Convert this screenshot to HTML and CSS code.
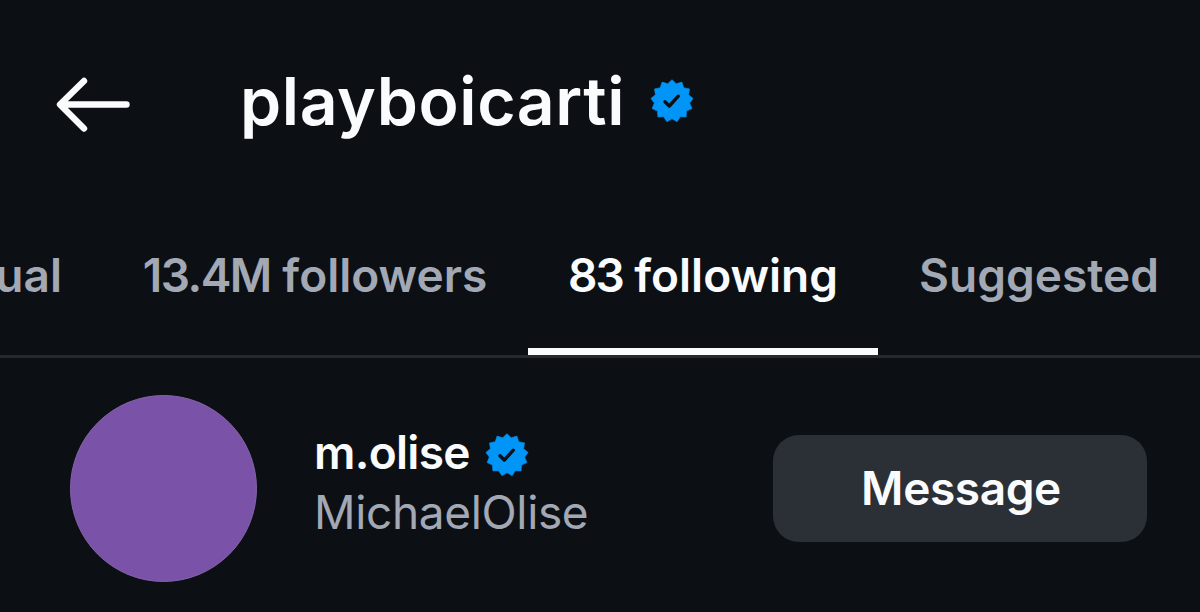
FILE: index.html
```html
<!DOCTYPE html>
<html lang="en">
<head>
    <meta charset="utf-8">
    <meta name="viewport" content="width=device-width, initial-scale=1">
    <title>playboicarti</title>
    <link rel="stylesheet" href="styles.css">
</head>
<body>
    <svg width="0" height="0" class="defs">
        <symbol id="verified" viewBox="-22 -22 44 44">
            <polygon fill="#0095f6" stroke="#0095f6" stroke-width=".6" stroke-linejoin="round" points="0,-21.3 4.3,-17.3 9.9,-18.9 11.8,-13.3 17.5,-12.1 16.6,-6.3 21.1,-2.6 17.7,2.1 19.9,7.6 14.6,10.1 14.1,15.9 8.3,15.8 5.1,20.7 0,17.8 -5.1,20.7 -8.3,15.8 -14.1,15.9 -14.6,10.1 -19.9,7.6 -17.7,2.1 -21.1,-2.6 -16.6,-6.3 -17.5,-12.1 -11.8,-13.3 -9.9,-18.9 -4.3,-17.3"/>
            <path d="M-7 .8 L-2.7 5 L6.3 -4.8" fill="none" stroke="#0c1014" stroke-width="3.4" stroke-linecap="round" stroke-linejoin="round"/>
        </symbol>
    </svg>

    <div class="header">
        <svg class="back" width="76" height="56" viewBox="0 0 76 56">
            <path d="M71.5 28.5H5.5M29 5L5 28.5L29 52.5" fill="none" stroke="#f9fbfd" stroke-width="6.4" stroke-linecap="round" stroke-linejoin="round"/>
        </svg>
        <h1>playboicarti</h1>
        <svg class="badge"><use href="#verified"/></svg>
    </div>

    <div class="tabs">
        <div class="tab mutual"><span>mutual</span></div>
        <div class="tab followers"><span><span class="count">13.4M</span> followers</span></div>
        <div class="tab following active"><span><span class="count">83</span> following</span></div>
        <div class="tab suggested"><span>Suggested</span></div>
    </div>

    <div class="user">
        <div class="avatar"></div>
        <div class="info">
            <div class="name"><span>m.olise</span><svg class="badge"><use href="#verified"/></svg></div>
            <div class="fullname"><span>MichaelOlise</span></div>
        </div>
        <button class="message"><span>Message</span></button>
    </div>
</body>
</html>
```

FILE: styles.css
```css
* {
    box-sizing: border-box;
}
body {
    margin: 0;
    width: 1200px;
    height: 612px;
    overflow: hidden;
    background: #0c1014;
    color: #f9fbfd;
    font-family: Inter, sans-serif;
    font-size: 46px;
    font-weight: 600;
}
.defs {
    display: block;
}
.badge {
    width: 44px;
    height: 44px;
    flex: none;
}

/* header */
.header {
    display: flex;
    align-items: center;
    height: 206px;
    padding-left: 55px;
}
.back {
    margin-top: 2px;
}
h1 {
    margin: -5px 0 0 109px;
    width: 387px;
    font-size: 66px;
    line-height: 80px;
    font-weight: 600;
    letter-spacing: .6px;
    white-space: nowrap;
}
.header .badge {
    margin: -5px 0 0 23px;
}

/* tabs */
.tabs {
    display: flex;
    height: 152px;
    border-bottom: 3px solid #25282d;
    color: #a2a8b4;
    white-space: nowrap;
}
.tab {
    display: flex;
    justify-content: center;
    height: 149px;
    padding-top: 41px;
    line-height: 56px;
    flex: none;
}
.mutual {
    width: 102px;
    justify-content: flex-end;
    padding-right: 40px;
}
.followers {
    width: 426px;
}
.following {
    width: 350px;
}
.suggested {
    width: 322px;
}
.count {
    letter-spacing: -1.5px;
}
.following .count {
    letter-spacing: -2px;
}
.active {
    color: #f9fbfd;
    border-bottom: 7px solid #f9fbfd;
}

/* user row */
.user {
    display: flex;
    align-items: center;
    height: 260px;
    padding: 0 53px 0 70px;
}
.avatar {
    width: 187px;
    height: 187px;
    border: 1px solid #8563a9;
    border-radius: 50%;
    background: #7a52a8;
}
.info {
    flex: 1;
    margin: -13px 0 0 57px;
}
.name {
    display: flex;
    align-items: center;
    height: 60px;
    line-height: 58px;
    letter-spacing: -.7px;
}
.name .badge {
    margin: 6px 0 0 15px;
}
.fullname {
    color: #a2a8b4;
    font-weight: 400;
    line-height: 60px;
    letter-spacing: -.35px;
}
.message {
    width: 374px;
    height: 107px;
    padding: 0 0 0 2px;
    border: 0;
    border-radius: 26px;
    background: #2b3036;
    color: #f9fbfd;
    font: inherit;
    letter-spacing: -.4px;
}
```
